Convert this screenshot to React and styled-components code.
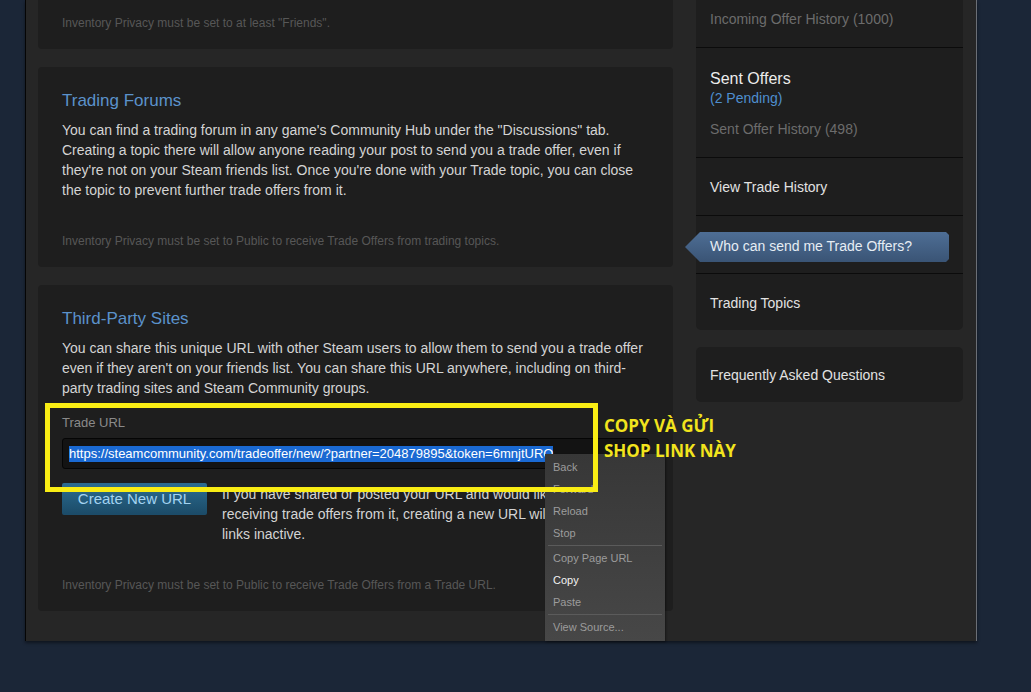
import React from 'react';
import styled, { createGlobalStyle } from 'styled-components';

const GlobalStyle = createGlobalStyle`
  html, body {
    margin: 0;
    padding: 0;
    background: #1b2637;
    font-family: "Liberation Sans", Arial, sans-serif;
    overflow: hidden;
  }
`;

const Page = styled.div`
  height: 692px;
  padding-left: 25px;
`;

// main steam panel
const Panel = styled.div`
  width: 952px;
  box-sizing: border-box;
  background: #262626;
  border-left: 1px solid #050505;
  border-right: 1px solid #6b6f76;
  box-shadow: 0 2px 3px rgba(0, 0, 0, 0.45);
  padding: 0 13px 30px 12px;
  display: grid;
  grid-template-columns: 635px 267px;
  column-gap: 23px;
  align-items: start;
`;

const LeftColumn = styled.div`
  display: flex;
  flex-direction: column;
  gap: 18px;
`;

const Card = styled.div`
  position: relative;
  background: #1e1e1e;
  border-radius: ${p => (p.$cut ? '0 0 4px 4px' : '4px')};
  padding: ${p => (p.$cut ? '15px 24px 18px' : '23px 24px 18px')};
`;

const CardTitle = styled.h2`
  margin: 0 0 8px;
  font-size: 17px;
  line-height: 22px;
  font-weight: normal;
  color: #5b92cb;
`;

const Body = styled.p`
  margin: 0;
  font-size: 14px;
  line-height: 20px;
  color: #d4d4d4;
`;

const Footnote = styled.div`
  margin-top: ${p => (p.$first ? '0' : '33px')};
  font-size: 12px;
  line-height: 16px;
  color: #575757;
`;

const FieldLabel = styled.div`
  margin-top: 16px;
  font-size: 13px;
  line-height: 18px;
  color: #8a8a8a;
`;

const UrlField = styled.div`
  margin-top: 6px;
  height: 31px;
  box-sizing: border-box;
  background: #131313;
  border: 1px solid #050505;
  border-radius: 3px;
  padding: 0 6px;
  display: flex;
  align-items: center;
  font-size: 13px;
  overflow: hidden;
  white-space: nowrap;
`;

const Selected = styled.span`
  background: #1a69d2;
  color: #ffffff;
  line-height: 16px;
`;

const ButtonRow = styled.div`
  margin-top: 14px;
  display: flex;
  align-items: flex-start;
  gap: 15px;
`;

const BlueButton = styled.button`
  flex: none;
  width: 145px;
  height: 32px;
  border: none;
  border-radius: 2px;
  background: linear-gradient(to bottom, #2b6b8f 5%, #1c4c69 95%);
  color: #a3d3f1;
  font-family: inherit;
  font-size: 15px;
  padding: 0 0 1px;
  cursor: pointer;
`;

const SideText = styled(Body)`
  flex: 1;
  padding-top: 1px;
`;

// yellow annotation drawn on the screenshot
const Highlight = styled.div`
  position: absolute;
  left: 7px;
  top: 118px;
  width: 553px;
  height: 89px;
  box-sizing: border-box;
  border: 5px solid #f9ed14;
  z-index: 3;
`;

const Note = styled.div`
  position: absolute;
  left: 566px;
  top: 128px;
  width: 200px;
  font-family: "Open Sans", "Noto Sans", sans-serif;
  font-weight: 700;
  font-size: 17px;
  line-height: 25px;
  color: #f2e41d;
  z-index: 3;
`;

const ContextMenu = styled.div`
  position: absolute;
  left: 507px;
  top: 169px;
  width: 120px;
  padding: 2px 0 3px;
  background: linear-gradient(to bottom, #373737, #474747);
  box-shadow: 1px 1px 2px rgba(0, 0, 0, 0.4);
  z-index: 2;
`;

const MenuItem = styled.div`
  height: 22px;
  line-height: 22px;
  padding-left: 8px;
  font-size: 11px;
  color: ${p => (p.$active ? '#f2f2f2' : '#9c9c9c')};
`;

const MenuSep = styled.div`
  height: 1px;
  margin: 1px 3px;
  background: #5b5b5b;
`;

const Sidebar = styled.div`
  display: flex;
  flex-direction: column;
  gap: 17px;
`;

const SideBlock = styled.div`
  background: #1e1e1e;
  border-radius: ${p => (p.$cut ? '0 0 5px 5px' : '5px')};
`;

const SideSection = styled.div`
  padding: ${p => p.$pad || '20px 14px 19px'};
  & + & {
    border-top: 1px solid #0b0b0b;
  }
`;

const SideLink = styled.div`
  font-size: 14px;
  line-height: 18px;
  color: ${p => p.$color || '#e2e2e2'};
`;

const SideHeading = styled.div`
  font-size: 16px;
  line-height: 20px;
  color: #ececec;
  padding-top: 1px;
`;

const Pending = styled.div`
  font-size: 14px;
  line-height: 18px;
  color: #4f8fcf;
  margin-bottom: 13px;
`;

const ActiveTab = styled.div`
  margin-left: -11px;
  margin-right: 14px;
  height: 30px;
  box-sizing: border-box;
  padding: 0 0 3px 25px;
  display: flex;
  align-items: center;
  font-size: 14px;
  color: #e6edf4;
  background: linear-gradient(to bottom, #4e6e95, #3a5475);
  clip-path: polygon(0 50%, 15px 0, calc(100% - 3px) 0, 100% 3px, 100% calc(100% - 3px), calc(100% - 3px) 100%, 15px 100%);
`;

const menuItems = [
  { label: 'Back' },
  { label: 'Forward' },
  { label: 'Reload' },
  { label: 'Stop', sep: true },
  { label: 'Copy Page URL' },
  { label: 'Copy', active: true },
  { label: 'Paste', sep: true },
  { label: 'View Source...' },
];

export default function App() {
  return (
    <Page>
      <GlobalStyle />
      <Panel>
        <LeftColumn>
          <Card $cut>
            <Footnote $first>Inventory Privacy must be set to at least "Friends".</Footnote>
          </Card>

          <Card>
            <CardTitle>Trading Forums</CardTitle>
            <Body>
              You can find a trading forum in any game's Community Hub under the "Discussions" tab.
              Creating a topic there will allow anyone reading your post to send you a trade offer, even if
              they're not on your Steam friends list. Once you're done with your Trade topic, you can close
              the topic to prevent further trade offers from it.
            </Body>
            <Footnote>Inventory Privacy must be set to Public to receive Trade Offers from trading topics.</Footnote>
          </Card>

          <Card>
            <CardTitle>Third-Party Sites</CardTitle>
            <Body>
              You can share this unique URL with other Steam users to allow them to send you a trade offer
              even if they aren't on your friends list. You can share this URL anywhere, including on third-party
              trading sites and Steam Community groups.
            </Body>
            <FieldLabel>Trade URL</FieldLabel>
            <UrlField>
              <Selected>https://steamcommunity.com/tradeoffer/new/?partner=204879895&amp;token=6mnjtURO</Selected>
            </UrlField>
            <ButtonRow>
              <BlueButton>Create New URL</BlueButton>
              <SideText>
                If you have shared or posted your URL and would like to stop receiving trade offers from it,
                creating a new URL will make the old links inactive.
              </SideText>
            </ButtonRow>
            <Footnote>Inventory Privacy must be set to Public to receive Trade Offers from a Trade URL.</Footnote>

            <ContextMenu>
              {menuItems.map(item => (
                <React.Fragment key={item.label}>
                  <MenuItem $active={item.active}>{item.label}</MenuItem>
                  {item.sep && <MenuSep />}
                </React.Fragment>
              ))}
            </ContextMenu>
            <Highlight />
            <Note>
              COPY VÀ GỬI
              <br />
              SHOP LINK NÀY
            </Note>
          </Card>
        </LeftColumn>

        <Sidebar>
          <SideBlock $cut>
            <SideSection $pad="10px 14px 19px">
              <SideLink $color="#6c6c6c">Incoming Offer History (1000)</SideLink>
            </SideSection>
            <SideSection>
              <SideHeading>Sent Offers</SideHeading>
              <Pending>(2 Pending)</Pending>
              <SideLink $color="#6c6c6c">Sent Offer History (498)</SideLink>
            </SideSection>
            <SideSection>
              <SideLink>View Trade History</SideLink>
            </SideSection>
            <SideSection $pad="16px 0 11px">
              <ActiveTab>Who can send me Trade Offers?</ActiveTab>
            </SideSection>
            <SideSection $pad="20px 14px 18px">
              <SideLink>Trading Topics</SideLink>
            </SideSection>
          </SideBlock>
          <SideBlock>
            <SideSection $pad="19px 14px 18px">
              <SideLink>Frequently Asked Questions</SideLink>
            </SideSection>
          </SideBlock>
        </Sidebar>
      </Panel>
    </Page>
  );
}
